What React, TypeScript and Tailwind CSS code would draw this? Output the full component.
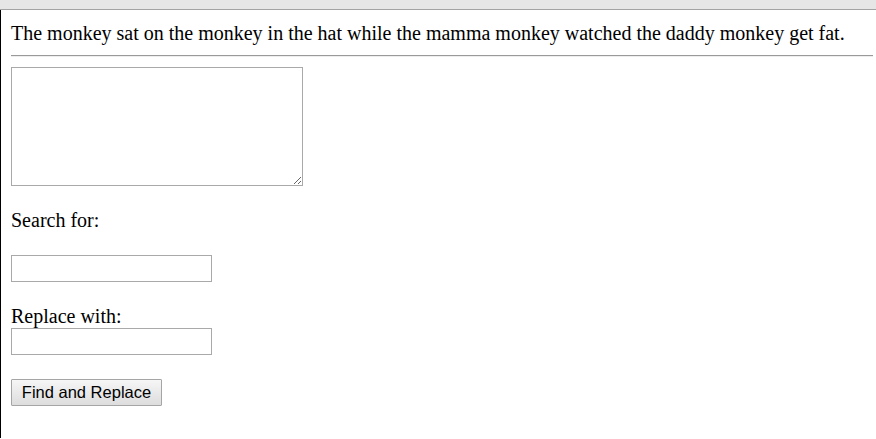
export default function App() {
  return (
    <div className="min-h-[439px] bg-white font-['Liberation_Serif',serif] text-black">
      <div className="h-[10px] border-b border-[#a3a3a3] bg-[#e6e6e6]" />
      <div className="min-h-[428px] border-l border-black pl-[10px] pr-[3px]">
        <p className="pt-[12px] text-[20px] leading-[23px]">
          The monkey sat on the monkey in the hat while the mamma monkey watched the daddy monkey get fat.
        </p>
        <hr className="mt-[10px] border-t border-b border-t-[#9a9a9a] border-b-[#eeeeee]" />
        <textarea className="mt-[10px] block h-[119px] w-[292px] border border-[#a9a9a9] bg-white" />
        <p className="mt-[23px] text-[20px] leading-[23px]">Search for:</p>
        <input type="text" className="mt-[23px] block h-[27px] w-[201px] border border-[#a9a9a9] bg-white" />
        <p className="mt-[23px] text-[20px] leading-[23px]">Replace with:</p>
        <input type="text" className="block h-[27px] w-[201px] border border-[#a9a9a9] bg-white" />
        <button className="mt-[24px] block h-[27px] w-[151px] rounded-[1px] border border-[#a5a5a5] bg-gradient-to-b from-[#f6f6f6] to-[#dddddd] font-['Liberation_Sans',sans-serif] text-[16.5px] leading-none text-black">
          Find and Replace
        </button>
      </div>
    </div>
  );
}
